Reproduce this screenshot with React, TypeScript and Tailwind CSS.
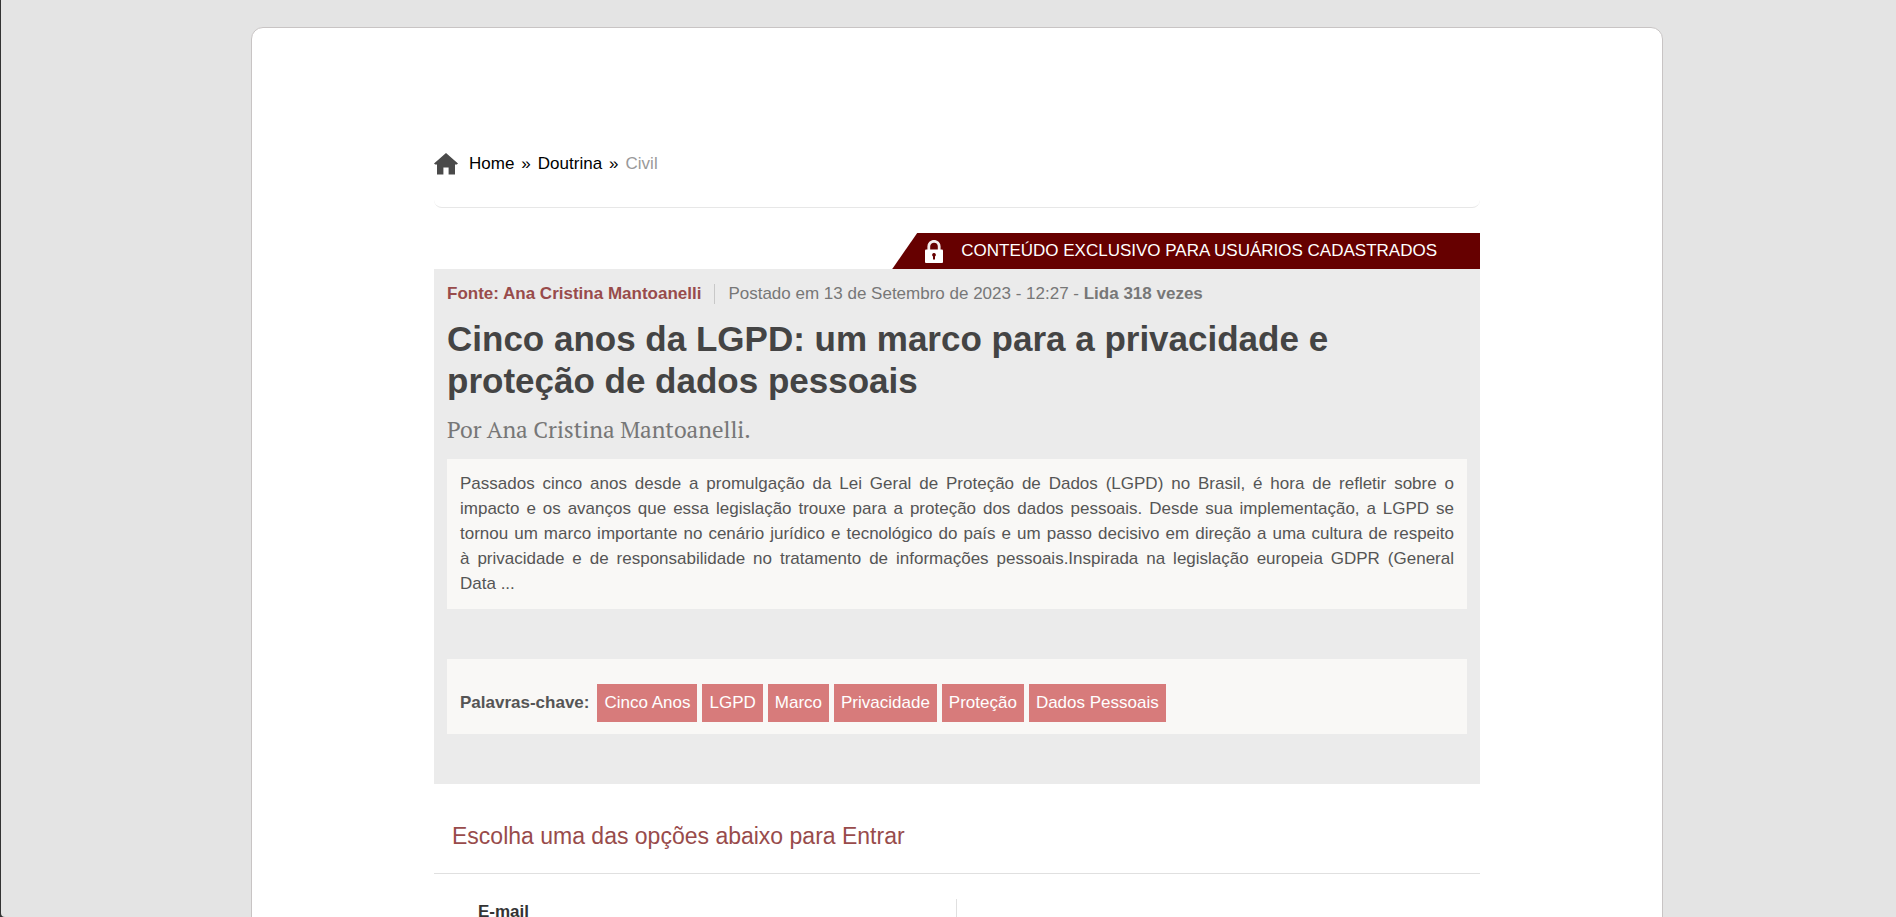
const SUMMARY_LINES = [
  "Passados cinco anos desde a promulgação da Lei Geral de Proteção de Dados (LGPD) no Brasil, é hora de refletir sobre o",
  "impacto e os avanços que essa legislação trouxe para a proteção dos dados pessoais. Desde sua implementação, a LGPD se",
  "tornou um marco importante no cenário jurídico e tecnológico do país e um passo decisivo em direção a uma cultura de respeito",
  "à privacidade e de responsabilidade no tratamento de informações pessoais.Inspirada na legislação europeia GDPR (General",
  "Data ...",
];

const KEYWORDS = ["Cinco Anos", "LGPD", "Marco", "Privacidade", "Proteção", "Dados Pessoais"];

function HomeIcon() {
  return (
    <svg width="24" height="22" viewBox="0 0 24 22" fill="#4a4a4a" aria-hidden="true">
      <path d="M12 0 24 10.6 22.8 11.6H21V21.5H14.6V14.4H9.4V21.5H3V11.6H1.2L0 10.6Z" />
    </svg>
  );
}

function LockIcon() {
  return (
    <svg width="18" height="23" viewBox="0 0 18 23" aria-hidden="true">
      <path d="M3.800 10.500V6.500a5.200 5.200 0 0 1 10.400 0v4" fill="none" stroke="#f3eded" strokeWidth="2.800" />
      <rect y="9.500" width="18" height="13.500" rx="1" fill="#fff" />
      <path d="M9 13a1.900 1.900 0 0 1 1 3.500V19.500H8v-3A1.900 1.900 0 0 1 9 13Z" fill="#660000" />
    </svg>
  );
}

function Breadcrumb() {
  return (
    <nav className="flex h-[57px] items-start rounded-b-lg border-b border-[#e7e7e7]">
      <div className="flex items-center gap-[11px]">
        <HomeIcon />
        <ol className="flex gap-[7px] leading-[25px] text-black">
          <li>
            <a href="#home">Home</a>
          </li>
          <li aria-hidden="true">»</li>
          <li>
            <a href="#doutrina">Doutrina</a>
          </li>
          <li aria-hidden="true">»</li>
          <li className="text-[#999]">Civil</li>
        </ol>
      </div>
    </nav>
  );
}

function ExclusiveBanner() {
  return (
    <div className="mt-[25px] flex justify-end">
      <div className="flex h-9 items-center gap-[18px] bg-[#660000] pr-[43px] pl-[33px] text-white [clip-path:polygon(25px_0,100%_0,100%_100%,0_100%)]">
        <LockIcon />
        <span>CONTEÚDO EXCLUSIVO PARA USUÁRIOS CADASTRADOS</span>
      </div>
    </div>
  );
}

function Article() {
  return (
    <article className="bg-[#ebebeb] px-[13px] pt-3 pb-[50px]">
      <div className="flex items-center leading-[25px] text-[#777]">
        <strong className="text-[#984b4b]">Fonte: Ana Cristina Mantoanelli</strong>
        <span className="mx-[13px] h-5 w-px bg-[#c8c8c8]" />
        <span>
          Postado em 13 de Setembro de 2023 - 12:27 - <strong>Lida 318 vezes</strong>
        </span>
      </div>

      <h1 className="mt-3 max-w-[960px] text-[35px] leading-[42px] font-bold text-[#444]">
        Cinco anos da LGPD: um marco para a privacidade e proteção de dados pessoais
      </h1>

      <p className="mt-3 font-['PT_Serif','Liberation_Serif',serif] text-[23px] leading-8 text-[#777]">
        Por Ana Cristina Mantoanelli.
      </p>

      <p className="mt-[13px] bg-[#f9f8f6] px-[13px] pt-3 pb-[13px] text-justify leading-[25px] text-[#555]">
        {SUMMARY_LINES.map((line) => (
          <span key={line} className="block [text-align-last:justify] last:[text-align-last:left]">
            {line}
          </span>
        ))}
      </p>

      <div className="mt-[50px] flex flex-wrap items-center gap-[5px] bg-[#f9f8f6] px-[13px] pt-[25px] pb-3">
        <strong className="mr-[3px] text-[#555]">Palavras-chave:</strong>
        {KEYWORDS.map((keyword) => (
          <a key={keyword} href="#palavra-chave" className="bg-[#d77b7b] px-[7px] leading-[38px] text-white">
            {keyword}
          </a>
        ))}
      </div>
    </article>
  );
}

function LoginSection() {
  return (
    <section>
      <h2 className="border-b border-[#e0e0e0] px-[18px] pt-9 pb-5 text-[23px] leading-[33px] text-[#984b4b]">
        Escolha uma das opções abaixo para Entrar
      </h2>
      <div className="mt-[25px] grid grid-cols-2">
        <form className="flex flex-col border-r border-[#e0e0e0] px-11">
          <label htmlFor="email" className="leading-[25px] font-bold text-[#333]">
            E-mail
          </label>
          <input id="email" type="email" className="h-10 border border-[#ccc] px-3" />
        </form>
      </div>
    </section>
  );
}

export default function App() {
  return (
    <div className="h-screen bg-[#333] pl-px font-['Liberation_Sans',Arial,sans-serif] text-[17px]">
      <div className="h-full overflow-hidden rounded-bl bg-[#e4e4e4] pt-[27px] pl-[17px]">
        <main className="mx-auto min-h-screen max-w-[1412px] rounded-t-xl border border-[#c8c4c4] bg-white px-6 pt-[123px]">
          <div className="mx-auto max-w-[1046px]">
            <Breadcrumb />
            <ExclusiveBanner />
            <Article />
            <LoginSection />
          </div>
        </main>
      </div>
    </div>
  );
}
